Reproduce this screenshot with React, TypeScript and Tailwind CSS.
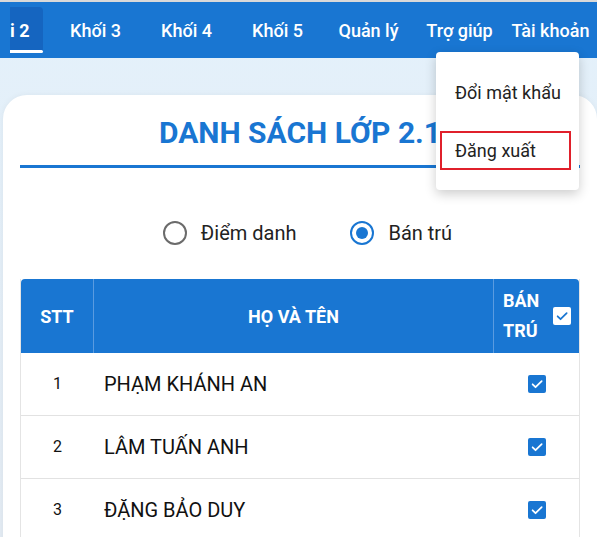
import React from "react";

const tabs = ["Khối 3", "Khối 4", "Khối 5", "Quản lý", "Trợ giúp", "Tài khoản"];

const students = [
  { stt: 1, name: "PHẠM KHÁNH AN" },
  { stt: 2, name: "LÂM TUẤN ANH" },
  { stt: 3, name: "ĐẶNG BẢO DUY" },
];

function Check(props: { light?: boolean }) {
  return (
    <span
      className={`flex h-[18px] w-[18px] items-center justify-center rounded-[2px] ${
        props.light ? "bg-white" : "bg-[#1976d2]"
      }`}
    >
      <svg width="14" height="14" viewBox="0 0 24 24" fill="none">
        <path
          d="M4.5 12.5l5 5L20 7"
          stroke={props.light ? "#1976d2" : "#ffffff"}
          strokeWidth="3"
          strokeLinecap="round"
          strokeLinejoin="round"
        />
      </svg>
    </span>
  );
}

function Radio(props: { checked?: boolean; label: string }) {
  return (
    <label className="flex items-center gap-[14px]">
      <span
        className={`flex h-[24px] w-[24px] items-center justify-center rounded-full border-2 ${
          props.checked ? "border-[#1976d2]" : "border-[#6b6b6b]"
        }`}
      >
        {props.checked && <span className="h-[12px] w-[12px] rounded-full bg-[#1976d2]" />}
      </span>
      <span className="text-[20px] text-[#222]">{props.label}</span>
    </label>
  );
}

export default function App() {
  return (
    <div
      className="relative h-[537px] w-[597px] overflow-hidden bg-gradient-to-b from-[#e4f1fb] to-[#e3ebf3]"
      style={{ fontFamily: "Roboto, 'Noto Sans', sans-serif" }}
    >
      <div className="border-t-2 border-[#d9d9d9]">
        <nav className="flex h-[56px] items-center overflow-hidden bg-[#1976d2] pl-[10px] text-[18px] font-medium text-white">
          <div className="relative flex h-[46px] w-[33px] shrink-0 items-center rounded-r-[4px] bg-[#1565c0] font-bold">
            <span>i 2</span>
            <span className="absolute bottom-0 left-0 h-[3px] w-full rounded-r-[3px] bg-white" />
          </div>
          <div className="ml-[7px] flex">
            {tabs.map((t) => (
              <span key={t} className="w-[91px] shrink-0 whitespace-nowrap text-center">
                {t}
              </span>
            ))}
          </div>
        </nav>
      </div>

      <main className="ml-[3px] mt-[37px] rounded-t-[24px] bg-white px-[17px] pt-[19px] shadow-[0_0_6px_rgba(0,0,0,0.05)]">
        <h1 className="text-center text-[30px] font-bold leading-[38px] text-[#1976d2]">
          DANH SÁCH LỚP 2.1
        </h1>
        <div className="mt-[13px] h-[3px] bg-[#1976d2]" />

        <div className="mt-[50px] flex justify-center gap-[54px] pl-[15px]">
          <Radio label="Điểm danh" />
          <Radio checked label="Bán trú" />
        </div>

        <div className="mt-[31px] border-x border-[#e4e4e4]">
          <div className="flex h-[74px] rounded-t-[4px] bg-[#1976d2] text-[18px] font-bold text-white">
            <div className="flex w-[73px] items-center justify-center border-r border-[#5a9be0]">STT</div>
            <div className="flex w-[400px] items-center justify-center border-r border-[#5a9be0]">
              HỌ VÀ TÊN
            </div>
            <div className="flex flex-1 items-center gap-[14px] pl-[9px]">
              <span className="leading-[30px]">
                BÁN
                <br />
                TRÚ
              </span>
              <Check light />
            </div>
          </div>
          {students.map((s) => (
            <div key={s.stt} className="flex h-[63px] items-center border-b border-[#e2e2e2] text-[#111]">
              <div className="w-[73px] text-center text-[16px]">{s.stt}</div>
              <div className="w-[400px] pl-[10px] text-[20px]">{s.name}</div>
              <div className="flex flex-1 justify-center">
                <Check />
              </div>
            </div>
          ))}
        </div>
      </main>

      <div className="absolute left-[436px] top-[52px] w-[143px] rounded-[4px] bg-white pb-[20px] pl-[4px] pr-[8px] pt-[21px] text-[18px] text-[#222] shadow-[0_4px_12px_rgba(0,0,0,0.2)]">
        <div className="flex h-[39px] items-center pl-[15px]">Đổi mật khẩu</div>
        <div className="mt-[19px] flex h-[39px] items-center border-2 border-[#e0202b] pl-[13px]">Đăng xuất</div>
      </div>
    </div>
  );
}
